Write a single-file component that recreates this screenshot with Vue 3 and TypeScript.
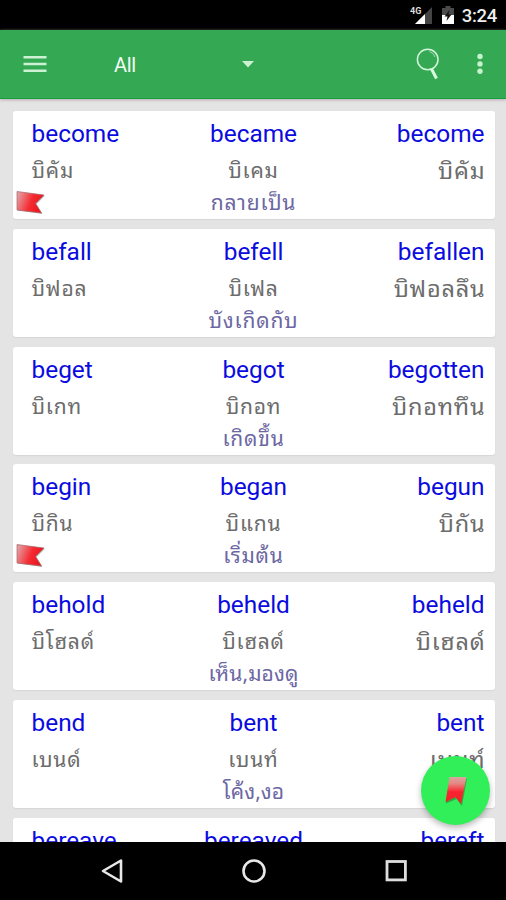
<script setup lang="ts">
interface Verb {
  forms: [string, string, string]
  sounds: [string, string, string]
  meaning: string
  flagged?: boolean
}

const verbs: Verb[] = [
  { forms: ['become', 'became', 'become'], sounds: ['บิคัม', 'บิเคม', 'บิคัม'], meaning: 'กลายเป็น', flagged: true },
  { forms: ['befall', 'befell', 'befallen'], sounds: ['บิฟอล', 'บิเฟล', 'บิฟอลลึน'], meaning: 'บังเกิดกับ' },
  { forms: ['beget', 'begot', 'begotten'], sounds: ['บิเกท', 'บิกอท', 'บิกอททึน'], meaning: 'เกิดขึ้น' },
  { forms: ['begin', 'began', 'begun'], sounds: ['บิกิน', 'บิแกน', 'บิกัน'], meaning: 'เริ่มต้น', flagged: true },
  { forms: ['behold', 'beheld', 'beheld'], sounds: ['บิโฮลด์', 'บิเฮลด์', 'บิเฮลด์'], meaning: 'เห็น,มองดู' },
  { forms: ['bend', 'bent', 'bent'], sounds: ['เบนด์', 'เบนท์', 'เบนท์'], meaning: 'โค้ง,งอ' },
  { forms: ['bereave', 'bereaved', 'bereft'], sounds: ['บิรีฟว์', 'บิรีฟว์ด', 'บิเรฟท์'], meaning: 'สูญเสีย' },
]
</script>

<template>
  <div class="screen">
    <div class="status">
      <svg class="signal" viewBox="0 0 24 20" width="24" height="20">
        <path d="M22 1V18H5Z" fill="#444" />
        <path d="M15 8V18H5Z" fill="#fff" />
        <text x="0" y="8" class="net">4G</text>
      </svg>
      <svg class="battery" viewBox="0 0 12 18" width="12" height="18">
        <path d="M0 2H3.500V0H8.500V2H12V18H0Z" fill="#4a4a4a" />
        <path d="M0 9H12V18H0Z" fill="#fff" />
        <path d="M7.500 4L2.500 10.500H5.500L4.500 15L9.500 8.500H6.500Z" fill="#111" />
      </svg>
      <span class="clock">3:24</span>
    </div>

    <header class="toolbar">
      <svg class="menu" viewBox="0 0 24 18" width="24" height="18">
        <path d="M0.500 2.300H23.500M0.500 9H23.500M0.500 15.700H23.500" stroke="#ccf2d3" stroke-width="2.500" />
      </svg>
      <div class="spinner">
        <span>All</span>
        <svg viewBox="0 0 12 7" width="12" height="7"><path d="M0 0H12L6 6.500Z" fill="#ccf2d3" /></svg>
      </div>
      <svg class="search" viewBox="0 0 24 32" width="24" height="32">
        <circle cx="11.700" cy="11.500" r="10.300" fill="none" stroke="#d4f6da" stroke-width="1.500" />
        <path d="M13.500 3.500Q18 5 19 9" fill="none" stroke="#a4dcb0" stroke-width="1" />
        <path d="M15.500 21L20.500 30.500" stroke="#d9fbe0" stroke-width="3" />
      </svg>
      <svg class="more" viewBox="0 0 6 22" width="6" height="22">
        <g fill="#c4f4cd"><circle cx="3" cy="3.500" r="2.700" /><circle cx="3" cy="10.900" r="2.700" /><circle cx="3" cy="18.200" r="2.700" /></g>
      </svg>
    </header>

    <main class="list">
      <article v-for="verb in verbs" :key="verb.forms[0]" class="card">
        <div class="row forms"><span v-for="(f, i) in verb.forms" :key="i">{{ f }}</span></div>
        <div class="row sounds"><span v-for="(s, i) in verb.sounds" :key="i">{{ s }}</span></div>
        <div class="meaning" :class="{ tight: verb.meaning.includes(',') }">{{ verb.meaning }}</div>
        <svg v-if="verb.flagged" class="flag" viewBox="0 0 30 26" width="30" height="26">
          <defs>
            <linearGradient id="flagFill" x1="0" y1="0.200" x2="1" y2="0.500">
              <stop offset="0" stop-color="#e3a0a3" /><stop offset="0.550" stop-color="#f52b32" /><stop offset="1" stop-color="#e8141b" />
            </linearGradient>
          </defs>
          <path d="M1.500 2L29 5.800L20.500 14.200L26.500 24L1.500 20.500Z" fill="#777" opacity=".5" />
          <path d="M1 1.500L28 5L19.500 13.500L25.500 23L1 20Z" fill="url(#flagFill)" stroke="#a66568" stroke-width=".7" />
        </svg>
      </article>
      <button class="fab" aria-label="Flagged verbs">
        <svg viewBox="0 0 26 32" width="26" height="32">
          <defs>
            <linearGradient id="fabFill" x1="0.500" y1="0" x2="0.500" y2="1">
              <stop offset="0" stop-color="#dba7a0" /><stop offset=".25" stop-color="#e68582" /><stop offset=".55" stop-color="#fa2430" /><stop offset="1" stop-color="#f0202a" />
            </linearGradient>
          </defs>
          <path d="M7 3L24 3.500L19 31L13.500 24L3 28.500Z" fill="#31732e" opacity=".55" />
          <path d="M6.500 2H23.500L18 29L12.500 22L2.500 27Z" fill="url(#fabFill)" />
        </svg>
      </button>
    </main>

    <nav class="navbar">
      <svg viewBox="0 0 24 26" width="24" height="26"><path d="M21 2.500V23.500L3 13Z" fill="none" stroke="#e8e8e8" stroke-width="2.600" stroke-linejoin="round" /></svg>
      <svg viewBox="0 0 24 26" width="24" height="26"><circle cx="12" cy="13" r="10.500" fill="none" stroke="#e8e8e8" stroke-width="2.600" /></svg>
      <svg viewBox="0 0 24 26" width="24" height="26"><rect x="3" y="3.500" width="18.400" height="18.400" fill="none" stroke="#dedede" stroke-width="2.800" /></svg>
    </nav>
  </div>
</template>

<style>
body { margin: 0; overflow: hidden; }
</style>

<style scoped>
.screen {
  width: 506px;
  height: 900px;
  display: flex;
  flex-direction: column;
  overflow: hidden;
  background: #e4e4e4;
  font-family: Roboto, sans-serif;
}
.status {
  height: 30px;
  flex: none;
  box-sizing: border-box;
  padding: 6px 9px 0 0;
  display: flex;
  justify-content: flex-end;
  background: #000;
  color: #eee;
}
.net { font: 700 9px Roboto, sans-serif; fill: #ddd; }
.signal { margin-right: 8px; }
.battery { margin-right: 8px; }
.clock { font-size: 18.500px; line-height: 20px; font-weight: 500; letter-spacing: -.3px; }
.toolbar {
  position: relative;
  z-index: 1;
  height: 69px;
  flex: none;
  box-sizing: border-box;
  padding: 0 23px;
  display: flex;
  align-items: center;
  background: #35a853;
  border-bottom: 1px solid #169d3d;
  box-shadow: 0 1px 3px #b9a9b4;
}
.menu { margin-right: 67px; }
.spinner { width: 140px; display: flex; justify-content: space-between; align-items: center; color: #f2fff3; font-size: 20px; letter-spacing: -.3px; }
.spinner span { padding-top: 2px; }
.search { margin-left: auto; margin-right: 37px; }
.list {
  position: relative;
  height: 743px;
  flex: none;
  box-sizing: border-box;
  padding: 12px 11px 0 12.500px;
  display: flex;
  flex-direction: column;
  gap: 9.800px;
  overflow: hidden;
}
.card {
  position: relative;
  height: 108px;
  flex: none;
  box-sizing: border-box;
  padding: 9px 10.500px 0 19px;
  border-radius: 3px;
  background: #fff;
  box-shadow: 0 1px 1px #d6d6d6;
}
.row { display: grid; grid-template-columns: 131px 1fr 131px; white-space: nowrap; }
.row span:nth-child(2) { text-align: center; padding-right: 9px; }
.row span:nth-child(3) { text-align: right; }
.forms { height: 35px; line-height: 28px; font-size: 24.400px; color: #0b0be0; }
.sounds, .meaning {
  font-family: "Noto Sans Thai Looped", "Noto Looped Thai", "Droid Sans Thai", Loma, Waree, Garuda, "Noto Serif Thai", FreeSerif, serif;
  letter-spacing: .8px;
}
.sounds { height: 29px; line-height: 28px; font-size: 21px; color: #6c6c6c; }
.sounds span:nth-child(3) { font-size: 23.500px; margin-right: -1px; }
.meaning { height: 30px; line-height: 34px; padding-right: 9px; text-align: center; font-size: 21px; color: #6c67a3; }
.meaning.tight { letter-spacing: .1px; }
.flag { position: absolute; left: 3px; bottom: 3px; }
.fab {
  position: absolute;
  left: 421px;
  top: 657px;
  width: 69px;
  height: 69px;
  padding: 0;
  border: 0;
  border-radius: 50%;
  display: grid;
  place-items: center;
  background: #31ef58;
  box-shadow: 0 3px 6px rgba(0, 0, 0, .28);
}
.navbar {
  height: 58px;
  flex: none;
  padding-left: 1px;
  display: flex;
  justify-content: center;
  align-items: center;
  gap: 118px;
  background: #000;
}
</style>
